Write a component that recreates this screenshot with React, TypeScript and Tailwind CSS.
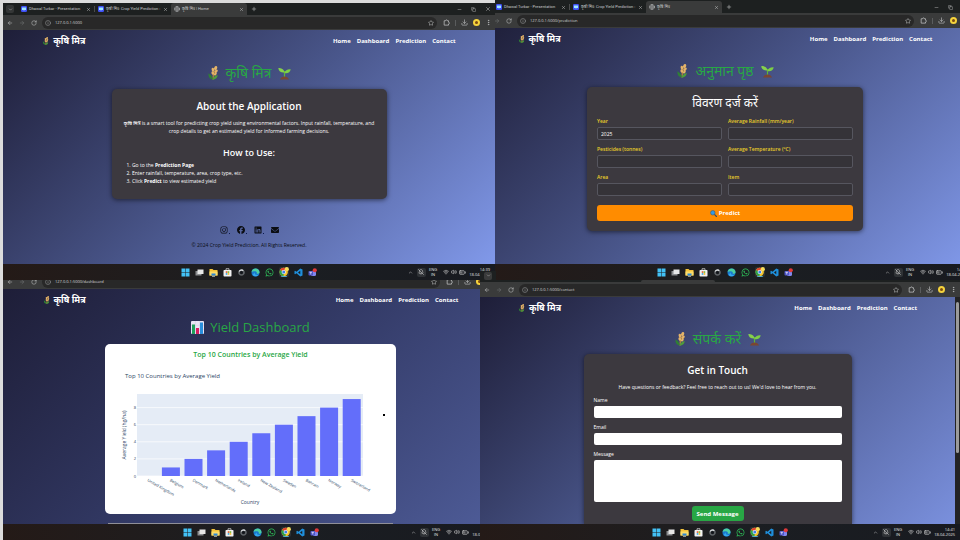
import type { ReactNode } from "react";
import {
  ArrowLeft,
  ArrowRight,
  BatteryMedium,
  BellOff,
  ChevronDown,
  ChevronUp,
  Copy,
  Download,
  EllipsisVertical,
  Globe,
  Info,
  Minus,
  Plus,
  RotateCw,
  Star,
  Volume2,
  Wifi,
  X,
} from "lucide-react";
import { FaEnvelope, FaFacebook, FaInstagram, FaLinkedin, FaWhatsapp } from "react-icons/fa6";

/* ---------- pictograms ---------- */

function Wheat({ className }: { className: string }) {
  return (
    <svg viewBox="0 0 20 24" className={className} aria-hidden="true">
      <path d="M10 23 C10 17 11 12 13 8" stroke="#b98b3a" strokeWidth="2" fill="none" />
      <g fill="#e5b468">
        <ellipse cx="14.5" cy="3.6" rx="2.6" ry="3.6" transform="rotate(18 14.5 3.6)" />
        <ellipse cx="10" cy="6.4" rx="2.4" ry="3.4" transform="rotate(-14 10 6.4)" />
        <ellipse cx="15.4" cy="9" rx="2.3" ry="3.3" transform="rotate(40 15.4 9)" />
        <ellipse cx="9.6" cy="12" rx="2.2" ry="3" transform="rotate(-18 9.6 12)" />
        <ellipse cx="14" cy="13.6" rx="2" ry="3" transform="rotate(40 14 13.6)" />
      </g>
      <path d="M10 23 C4 22.500 1.500 18 2.400 12.500 C6 15 9 18 10 23Z" fill="#2f7f35" />
      <path d="M9 23.500 C15 23.500 18 20 18 15.500 C14 16.500 10.500 18.500 9 23.500Z" fill="#4f9c3a" />
    </svg>
  );
}

function Sprout({ className }: { className: string }) {
  return (
    <svg viewBox="0 0 26 26" className={className} aria-hidden="true">
      <path d="M13 22 C13 16 13 12 13 8" stroke="#5fb53a" strokeWidth="2.4" fill="none" />
      <path d="M13 11 C12 4 6 2 0.6 2 C1 9 7 12 13 11Z" fill="#86d14b" />
      <path d="M13 12 C14 6 19 4 25.4 4.4 C24.5 11 19 13.5 13 12Z" fill="#7ccf45" />
      <path d="M4 25 C6 20 10 18.8 13 18.8 C16 18.8 20 20 22 25Z" fill="#7a4630" />
    </svg>
  );
}

function BarsEmoji({ className }: { className: string }) {
  return (
    <svg viewBox="0 0 26 26" className={className} aria-hidden="true">
      <rect x="0" y="0" width="26" height="26" rx="2" fill="#e9e4f4" />
      <path d="M0 8.5H26M0 17H26M8.7 0V26M17.3 0V26" stroke="#c9c2dc" strokeWidth="0.8" />
      <rect x="2" y="7" width="6" height="19" fill="#1fa05a" />
      <rect x="10" y="14" width="6" height="12" fill="#d81b60" />
      <rect x="18" y="3" width="6" height="23" fill="#2a8fdc" />
    </svg>
  );
}

function Magnifier({ className }: { className: string }) {
  return (
    <svg viewBox="0 0 20 20" className={className} aria-hidden="true">
      <path d="M12 12L18.5 18.5" stroke="#3b4a5c" strokeWidth="3.4" strokeLinecap="round" />
      <circle cx="8" cy="8" r="6.4" fill="#2f9be8" stroke="#4a6076" strokeWidth="2" />
    </svg>
  );
}

function Extension({ className }: { className: string }) {
  return (
    <svg viewBox="0 0 24 24" className={className} aria-hidden="true">
      <path
        d="M4 6H9A3 3 0 0 1 15 6H19V11A3 3 0 0 1 19 17V21H4Z"
        fill="none"
        stroke="currentColor"
        strokeWidth="2.4"
        strokeLinejoin="round"
      />
    </svg>
  );
}

/* ---------- browser chrome ---------- */

function Tab({ title, active, globe }: { title: string; active?: boolean; globe?: boolean }) {
  return (
    <div
      className={
        active
          ? "flex h-full w-[76px] shrink-0 items-center gap-[2px] rounded-t-[3px] bg-[#3a3b3b] px-[3px]"
          : "flex h-full w-[76px] shrink-0 items-center gap-[2px] px-[3px]"
      }
    >
      {globe ? (
        <Globe className="size-[6px] shrink-0 text-[#c4c6c8]" />
      ) : (
        <svg viewBox="0 0 12 12" className="size-[6px] shrink-0" aria-hidden="true">
          <rect width="12" height="12" rx="2.5" fill="#3f51f5" />
          <path d="M2 3H10V8H7L6 10L5 8H2Z" fill="#9fe8ff" />
        </svg>
      )}
      <span className="flex-1 font-['Roboto','Noto_Sans',sans-serif] text-[4px] leading-[8px] whitespace-nowrap text-[#c9cacb]">
        {title}
      </span>
      <X className="size-[5px] shrink-0 text-[#cfd0d1]" />
    </div>
  );
}

function TabStrip({ title }: { title: string }) {
  return (
    <div className="flex h-3 shrink-0 items-center bg-[#1d2020] pl-[3px]">
      <button
        type="button"
        aria-label="Search tabs"
        className="mr-1 flex size-[8px] items-center justify-center rounded-[2px] bg-[#343636]"
      >
        <ChevronDown className="size-[5px] text-[#d0d0d0]" />
      </button>
      <Tab title="Dhawal Turkar - Presentation" />
      <span className="h-[6px] w-px shrink-0 bg-[#4a4c4c]" />
      <Tab title="कृषी मित्र: Crop Yield Prediction :" />
      <Tab title={title} active globe />
      <Plus className="ml-1 size-[6px] shrink-0 text-[#d0d0d0]" />
      <div className="ml-auto flex items-center gap-[9px] pr-1 text-[#c8c8c8]">
        <Minus className="size-[5px]" />
        <Copy className="size-[5px]" />
        <X className="size-[6px]" />
      </div>
    </div>
  );
}

function Toolbar({ url }: { url: string }) {
  return (
    <div className="flex h-[15px] shrink-0 items-center bg-[#3a3b3b] pr-[3px] pl-1 text-[#c8cacb]">
      <div className="flex w-[35px] items-center gap-[6px]">
        <ArrowLeft className="size-[6px]" />
        <ArrowRight className="size-[6px] text-[#77797a]" />
        <RotateCw className="size-[6px]" />
      </div>
      <div className="flex h-3 flex-1 items-center gap-1 rounded-full bg-[#282828] px-[3px]">
        <Info className="size-[6px] text-[#9fa1a2]" />
        <span className="flex-1 text-[4px] leading-[8px] text-[#d4d5d6]">{url}</span>
        <Star className="size-[6px]" />
      </div>
      <div className="ml-[6px] flex items-center gap-[5px]">
        <Extension className="size-[7px]" />
        <span className="h-[6px] w-px bg-[#5a5c5d]" />
        <Download className="size-[7px]" />
        <span className="flex size-[7px] items-center justify-center rounded-full bg-[#f5d33c]">
          <span className="size-[3px] rounded-full bg-[#7c4b12]" />
        </span>
        <EllipsisVertical className="size-[7px]" />
      </div>
    </div>
  );
}

function Taskbar({ time }: { time: string }) {
  return (
    <div className="grid h-4 w-full shrink-0 grid-cols-[1fr_auto_1fr] items-center bg-linear-to-r from-[#241a17] via-[#1b1e22] via-55% to-[#181a20]">
      <span />
      <div className="flex items-center gap-[5px]">
        <svg viewBox="0 0 18 18" className="size-[9px]" aria-hidden="true">
          <path d="M1 1H8.5V8.5H1ZM9.5 1H17V8.5H9.5ZM1 9.5H8.5V17H1ZM9.5 9.5H17V17H9.5Z" fill="#43c1f5" />
        </svg>
        <svg viewBox="0 0 18 18" className="size-[9px]" aria-hidden="true">
          <rect x="1" y="6" width="12" height="9" fill="#8b8d90" />
          <rect x="5" y="3" width="12" height="9" fill="#e6e6e6" />
        </svg>
        <svg viewBox="0 0 18 18" className="size-[9px]" aria-hidden="true">
          <path d="M1 2H7L9 4H17V15H1Z" fill="#f6c33a" />
          <path d="M1 7H17V15H1Z" fill="#fcdc6b" />
          <rect x="5" y="11" width="8" height="4" fill="#2a86d8" />
          <rect x="6" y="16.5" width="6" height="1.5" fill="#b9bbbd" />
        </svg>
        <svg viewBox="0 0 18 18" className="size-[9px]" aria-hidden="true">
          <path d="M6 4V1.5H12V4" stroke="#e9e9e9" strokeWidth="1.4" fill="none" />
          <rect x="1" y="4" width="16" height="13" rx="1.5" fill="#f1f1f1" />
          <rect x="5.5" y="6.5" width="3.2" height="3.2" fill="#e8542c" />
          <rect x="9.3" y="6.5" width="3.2" height="3.2" fill="#7bb928" />
          <rect x="5.5" y="10.3" width="3.2" height="3.2" fill="#29a3e8" />
          <rect x="9.3" y="10.3" width="3.2" height="3.2" fill="#f7b71d" />
        </svg>
        <svg viewBox="0 0 18 18" className="size-[9px]" aria-hidden="true">
          <circle cx="9" cy="9" r="5" fill="none" stroke="#5d6165" strokeWidth="3.4" />
          <path d="M4.500 7A5 5 0 0 1 12.500 5.400" stroke="#d5d8db" strokeWidth="2.6" fill="none" />
          <circle cx="9" cy="9" r="2.4" fill="#12161c" />
        </svg>
        <svg viewBox="0 0 18 18" className="size-[9px]" aria-hidden="true">
          <circle cx="9" cy="9" r="8" fill="#1979cf" />
          <path d="M1.2 8C2 3 6 1 9 1C14 1 17 4.5 17 8.5C17 11 14 12 11.5 11.3C12.5 8.5 10.5 6.5 7.5 6.5C4.5 6.5 2.5 7 1.2 8Z" fill="#4ed0a0" />
          <path d="M7.5 8.5C6.5 12 9 14.5 14.5 13.8C12 17.5 6 17.5 3.5 13.5Z" fill="#35a9ee" />
        </svg>
        <FaWhatsapp className="size-[9px] text-[#2fc65c]" />
        <span className="flex size-[10px] items-center justify-center rounded-[2px] bg-[#2e3236]">
          <svg viewBox="0 0 18 18" className="size-[10px]" aria-hidden="true">
            <circle cx="8.5" cy="9" r="7.5" fill="#f3c32c" />
            <path d="M8.5 9L2 5.2A7.5 7.5 0 0 1 15 5.2Z" fill="#e2442f" />
            <path d="M8.5 9L2 5.2A7.5 7.5 0 0 0 8.1 16.5Z" fill="#2ba24c" />
            <circle cx="8.5" cy="9" r="3.8" fill="#fff" />
            <circle cx="8.5" cy="9" r="2.7" fill="#3f7fe8" />
            <circle cx="14" cy="4" r="3.8" fill="#f7dc5a" />
            <rect x="4" y="16.6" width="10" height="1.4" fill="#59c6f2" />
          </svg>
        </span>
        <svg viewBox="0 0 18 18" className="size-[9px]" aria-hidden="true">
          <path d="M12.5 1L17 3V15L12.5 17L5 10.5L2.2 12.7L1 12V6L2.2 5.3L5 7.5ZM12.5 5.5L8 9L12.5 12.5Z" fill="#1f8fdc" fillRule="evenodd" />
        </svg>
        <svg viewBox="0 0 18 18" className="size-[9px]" aria-hidden="true">
          <rect x="6" y="6" width="10" height="10" rx="3" fill="#8187ee" />
          <rect x="1" y="6" width="9" height="9" rx="1.5" fill="#4f56c8" />
          <path d="M3 8.5H8M5.5 8.5V13" stroke="#fff" strokeWidth="1.3" />
          <circle cx="13.5" cy="4.5" r="4.2" fill="#e0393b" />
        </svg>
      </div>
      <div className="flex items-center justify-end gap-[2px] pr-[5px] text-[#e4e4e4]">
        <ChevronUp className="mr-[2px] size-[5px]" />
        <span className="flex size-[9px] items-center justify-center rounded-[2px] bg-[#2f3236]">
          <BellOff className="size-[6px]" />
        </span>
        <span className="ml-px text-center text-[4px] leading-[5px]">
          ENG
          <br />
          IN
        </span>
        <Wifi className="ml-1 size-[6px]" />
        <Volume2 className="size-[6px]" />
        <BatteryMedium className="size-[7px]" />
        <span className="ml-px text-right text-[4px] leading-[5px] whitespace-nowrap">
          {time}
          <br />
          18-04-2025
        </span>
      </div>
    </div>
  );
}

/* ---------- shared parts of the site ---------- */

function SiteNav() {
  return (
    <nav className="flex h-[22px] shrink-0 items-center justify-between px-[8%] font-bold text-white">
      <a href="#home" className="flex items-center gap-1 text-[9px] leading-[14px]">
        <Wheat className="h-[8px] w-[7px]" />
        कृषि मित्र
      </a>
      <div className="flex gap-[6px] text-[6px] leading-[10px]">
        <a href="#home">Home</a>
        <a href="#dashboard">Dashboard</a>
        <a href="#prediction">Prediction</a>
        <a href="#contact">Contact</a>
      </div>
    </nav>
  );
}

function PageHeading({ children }: { children: ReactNode }) {
  return (
    <h1 className="flex h-5 shrink-0 items-center justify-center gap-[7px] text-[14px] leading-5 text-[#28a745]">
      <Wheat className="h-[14px] w-3" />
      {children}
      <Sprout className="size-[13px]" />
    </h1>
  );
}

const cardClass = "mx-auto rounded-[5px] bg-[#3c393f] text-white shadow-[0_1px_5px_rgba(0,0,0,0.55)]";

/* ---------- pages ---------- */

function HomePage() {
  return (
    <main className="flex min-h-0 flex-1 flex-col overflow-hidden bg-linear-135 from-[#1e1e38] via-[#4a578c] to-[#8199ea]">
      <SiteNav />
      <div className="h-[11px] shrink-0" />
      <PageHeading>कृषि मित्र</PageHeading>
      <section className={cardClass + " mt-[6px] w-[275px] px-[8px] pt-[10px] pb-[14px] text-center"}>
        <h2 className="text-[10px] leading-[14px] font-semibold">About the Application</h2>
        <p className="mt-[6px] text-[5px] leading-[8px] font-medium">
          कृषि मित्र is a smart tool for predicting crop yield using environmental factors. Input rainfall, temperature, and
          crop details to get an estimated yield for informed farming decisions.
        </p>
        <h3 className="mt-3 text-[9px] leading-[12px] font-semibold">How to Use:</h3>
        <ol className="mt-[2px] list-inside list-decimal pl-[7px] text-left text-[5px] leading-[8px] font-medium">
          <li>
            Go to the <b>Prediction Page</b>
          </li>
          <li>Enter rainfall, temperature, area, crop type, etc.</li>
          <li>
            Click <b>Predict</b> to view estimated yield
          </li>
        </ol>
      </section>
      <footer className="mt-auto flex flex-col items-center gap-[7px] pb-[15px] text-[#0b0d12]">
        <div className="flex gap-[7px]">
          <a href="#instagram" aria-label="Instagram" className="flex items-end gap-px">
            <FaInstagram className="size-[8px]" />
            <span className="h-px w-px bg-[#0b1a50]" />
          </a>
          <a href="#facebook" aria-label="Facebook" className="flex items-end gap-px">
            <FaFacebook className="size-[8px]" />
            <span className="h-px w-px bg-[#0b1a50]" />
          </a>
          <a href="#linkedin" aria-label="LinkedIn" className="flex items-end gap-px">
            <FaLinkedin className="size-[8px]" />
            <span className="h-px w-px bg-[#0b1a50]" />
          </a>
          <a href="#mail" aria-label="Email">
            <FaEnvelope className="size-[8px]" />
          </a>
        </div>
        <p className="text-[5px] leading-[8px] font-medium">© 2024 Crop Yield Prediction. All Rights Reserved.</p>
      </footer>
    </main>
  );
}

const predictionFields = [
  { id: "year", label: "Year", value: "2025" },
  { id: "rainfall", label: "Average Rainfall (mm/year)", value: "" },
  { id: "pesticides", label: "Pesticides (tonnes)", value: "" },
  { id: "temperature", label: "Average Temperature (°C)", value: "" },
  { id: "area", label: "Area", value: "" },
  { id: "item", label: "Item", value: "" },
];

function PredictionPage() {
  return (
    <main className="flex min-h-0 flex-1 flex-col overflow-hidden bg-linear-135 from-[#1e1e38] via-[#4a578c] to-[#8199ea]">
      <SiteNav />
      <div className="h-[11px] shrink-0" />
      <PageHeading>अनुमान पृष्ठ</PageHeading>
      <form className={cardClass + " mt-[6px] w-[276px] px-[10px] pt-2 pb-[10px]"}>
        <h2 className="text-center text-[12px] leading-4">विवरण दर्ज करें</h2>
        <div className="mt-[7px] grid grid-cols-2 gap-[6px]">
          {predictionFields.map((f) => (
            <div key={f.id} className="flex flex-col gap-[2px]">
              <label htmlFor={f.id} className="text-[5px] leading-[7px] font-semibold text-[#e8cd2a]">
                {f.label}
              </label>
              <input
                id={f.id}
                defaultValue={f.value}
                className="h-[13px] w-full rounded-[2px] border border-[#56565f] bg-[#353338] px-[3px] text-[5px] leading-[8px] font-medium text-white"
              />
            </div>
          ))}
        </div>
        <button
          type="button"
          className="mt-[9px] flex h-4 w-full items-center justify-center gap-[2px] rounded-[3px] bg-[#ff8c00] text-[6px] leading-[10px] font-bold"
        >
          <Magnifier className="size-[7px]" />
          Predict
        </button>
      </form>
    </main>
  );
}

const countries = [
  "United Kingdom",
  "Belgium",
  "Denmark",
  "Netherlands",
  "Ireland",
  "New Zealand",
  "Sweden",
  "Bahrain",
  "Norway",
  "Switzerland",
];

function YieldChart() {
  const step = 22.6;
  const unit = 8.55;
  return (
    <svg viewBox="0 0 291 145" className="w-full" role="img" aria-label="Average yield by country">
      <text x="20" y="13" fontSize="6" fill="#2a3f5f">
        Top 10 Countries by Average Yield
      </text>
      <rect x="32" y="29" width="226" height="82" fill="#e5ecf6" />
      {[0, 2, 4, 6, 8].map((v) => (
        <g key={v}>
          <line x1="32" x2="258" y1={111 - v * unit} y2={111 - v * unit} stroke="#fff" strokeWidth="0.7" />
          <text x="31" y={112.5 - v * unit} fontSize="4" fill="#2a3f5f" textAnchor="end">
            {v}
          </text>
        </g>
      ))}
      {countries.map((c, i) => (
        <g key={c}>
          <rect x={34.3 + i * step} y={111 - i * unit} width="18" height={i * unit} fill="#636efa" />
          <text x={42 + i * step} y="116" fontSize="4" fill="#2a3f5f" transform={`rotate(30 ${42 + i * step} 116)`}>
            {c}
          </text>
        </g>
      ))}
      <text x="145" y="139" fontSize="5" fill="#2a3f5f" textAnchor="middle">
        Country
      </text>
      <text x="21" y="70" fontSize="5" fill="#2a3f5f" textAnchor="middle" transform="rotate(-90 21 70)">
        Average Yield (hg/ha)
      </text>
      <rect x="278" y="49" width="2" height="2" fill="#000" />
    </svg>
  );
}

function DashboardPage() {
  return (
    <main className="flex min-h-0 flex-1 flex-col overflow-hidden bg-linear-135 from-[#1e1e38] via-[#333a66] to-[#4e5c98]">
      <SiteNav />
      <h1 className="mt-[6px] flex h-5 shrink-0 items-center justify-center gap-[6px] text-[13px] leading-5 font-medium text-[#28a745]">
        <BarsEmoji className="size-[13px]" />
        Yield Dashboard
      </h1>
      <section className="mx-auto mt-[7px] w-[291px] shrink-0 rounded-[5px] bg-white pt-[6px] pb-1">
        <h2 className="mb-[5px] text-center text-[7px] leading-[10px] font-semibold text-[#28a745]">
          Top 10 Countries by Average Yield
        </h2>
        <YieldChart />
      </section>
      <section className="mx-auto mt-[9px] h-5 w-[285px] shrink-0 bg-[#8f8f98]" />
    </main>
  );
}

function ContactPage() {
  return (
    <div className="flex min-h-0 flex-1">
      <main className="flex flex-1 flex-col overflow-hidden bg-linear-135 from-[#1e1e38] via-[#4a578c] to-[#7a90dd]">
        <SiteNav />
        <div className="h-[10px] shrink-0" />
        <PageHeading>संपर्क करें</PageHeading>
        <form className={cardClass + " mt-[5px] flex w-[268px] flex-1 flex-col rounded-b-none px-[10px] pt-[9px] text-[5px] leading-[8px] font-medium"}>
          <h2 className="text-center text-[10px] leading-[14px] font-semibold">Get in Touch</h2>
          <p className="mt-[6px] text-center">Have questions or feedback? Feel free to reach out to us! We'd love to hear from you.</p>
          <label htmlFor="name" className="mt-[5px]">
            Name
          </label>
          <input id="name" className="mt-[2px] h-3 shrink-0 rounded-[2px] bg-white px-1 text-black" />
          <label htmlFor="email" className="mt-[5px]">
            Email
          </label>
          <input id="email" type="email" className="mt-[2px] h-3 shrink-0 rounded-[2px] bg-white px-1 text-black" />
          <label htmlFor="message" className="mt-[5px]">
            Message
          </label>
          <textarea id="message" className="mt-[2px] h-[42px] shrink-0 resize-none rounded-[2px] bg-white px-1 text-black" />
          <button
            type="button"
            className="mx-auto mt-1 h-[15px] w-[52px] shrink-0 rounded-[3px] bg-[#28a745] text-[6px] leading-[8px] font-bold whitespace-nowrap"
          >
            Send Message
          </button>
        </form>
      </main>
      <div className="flex w-[5px] flex-col items-center bg-[#232324] pt-[5px]">
        <span className="h-[68%] w-[3px] rounded-full bg-[#9b9b9b]" />
      </div>
    </div>
  );
}

export default function App() {
  return (
    <div className="grid h-screen grid-rows-[280fr_260fr] overflow-hidden bg-[#1d2020] font-['Open_Sans','Noto_Sans',sans-serif]">
      <div className="grid min-h-0 grid-cols-[495fr_465fr]">
        <div className="flex min-h-0 min-w-0 flex-col overflow-hidden border-t-3 border-l-3 border-[#dcdcdc]">
          <TabStrip title="कृषि मित्र | Home" />
          <Toolbar url="127.0.0.1:5000" />
          <HomePage />
          <Taskbar time="14:39" />
        </div>
        <div className="min-h-0 min-w-0 overflow-hidden">
          <div className="mr-[-12px] ml-[-17px] flex h-full flex-col pt-px">
            <TabStrip title="कृषि मित्र" />
            <Toolbar url="127.0.0.1:5000/prediction" />
            <PredictionPage />
            <Taskbar time="14:40" />
          </div>
        </div>
      </div>
      <div className="grid min-h-0 grid-cols-2">
        <div className="min-h-0 min-w-0 overflow-hidden border-l-3 border-[#dcdcdc]">
          <div className="mr-[-18px] flex h-full flex-col">
            <div className="flex h-[9px] shrink-0 flex-col justify-end overflow-hidden">
              <Toolbar url="127.0.0.1:5000/dashboard" />
            </div>
            <DashboardPage />
            <Taskbar time="14:40" />
          </div>
        </div>
        <div className="relative flex min-h-0 min-w-0 flex-col">
          <div className="absolute -top-[9px] left-0 flex h-[9px] w-4 items-center justify-center bg-[#1d2020]">
            <span className="flex size-[8px] items-center justify-center rounded-[2px] bg-[#3a3b3b]">
              <ChevronDown className="size-[5px] text-[#d0d0d0]" />
            </span>
          </div>
          <div className="flex h-[2px] shrink-0 bg-[#1d2020] pl-[161px]">
            <span className="w-[74px] rounded-t-[2px] bg-[#3a3b3b]" />
          </div>
          <Toolbar url="127.0.0.1:5000/contact" />
          <ContactPage />
          <Taskbar time="14:41" />
        </div>
      </div>
    </div>
  );
}
